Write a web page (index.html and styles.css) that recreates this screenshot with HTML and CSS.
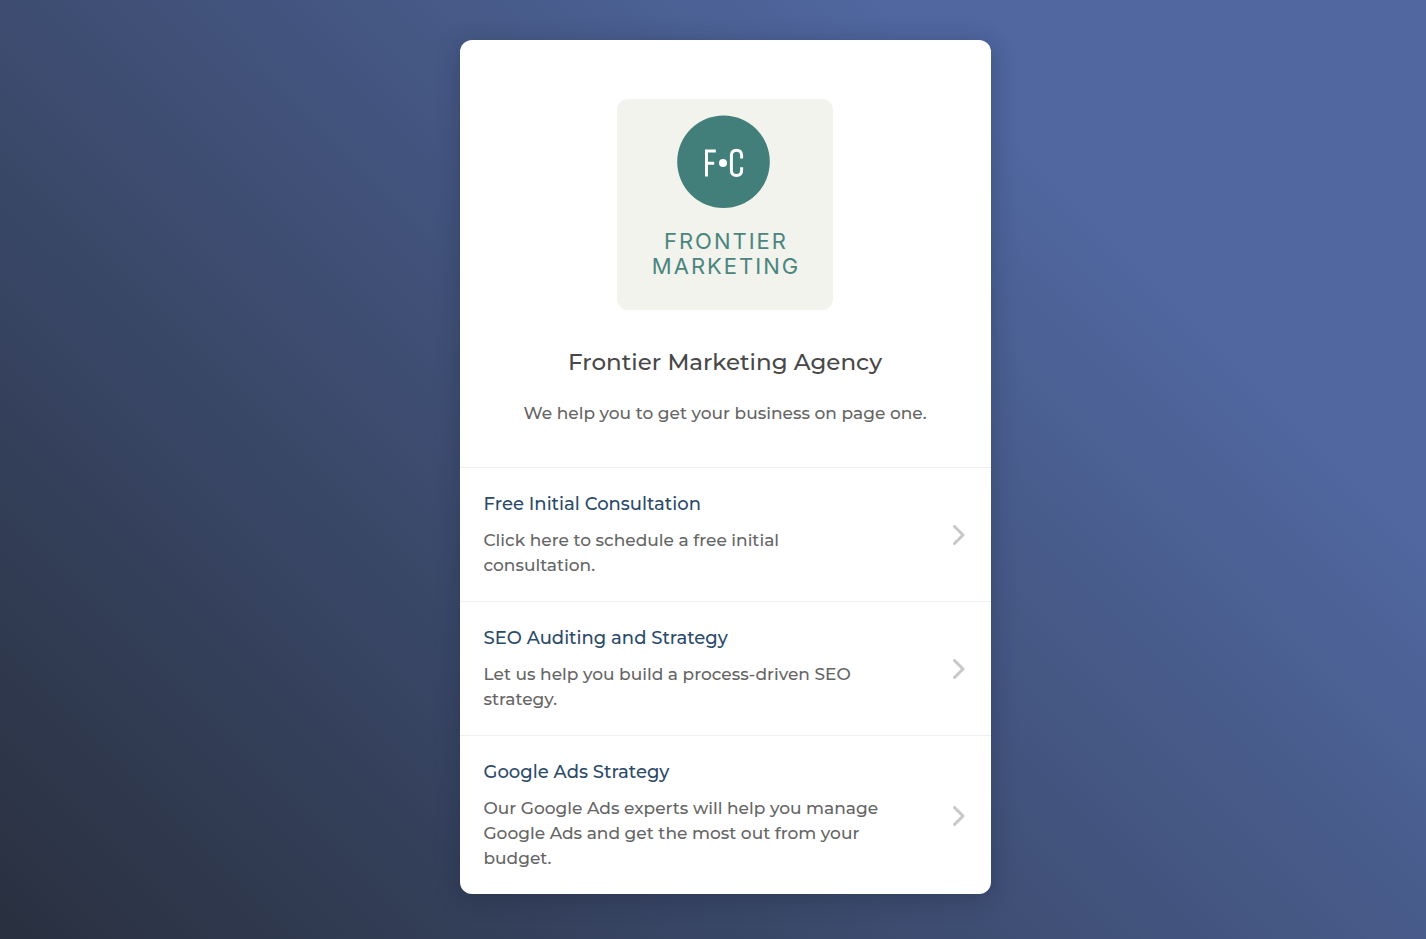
FILE: index.html
```html
<!DOCTYPE html>
<html lang="en">
<head>
<meta charset="utf-8">
<meta name="viewport" content="width=device-width, initial-scale=1">
<title>Frontier Marketing Agency</title>
<link rel="stylesheet" href="styles.css">
</head>
<body>
<main class="card">
  <header class="intro">
    <svg class="logo" viewBox="0 0 216 211" role="img" aria-label="Frontier Marketing logo">
      <rect width="216" height="211" rx="11" fill="#f2f3ec"/>
      <circle cx="106.500" cy="62.700" r="46.300" fill="#427e7a"/>
      <g fill="none" stroke="#fff" stroke-width="3">
        <path d="M98.800 52H89.500V77.500M89.500 64.200H97.200"/>
        <path d="M124.600 59.500V56.300Q124.600 51.300 119.500 51.300Q114.400 51.300 114.400 56.300V71.500Q114.400 76.500 119.500 76.500Q124.600 76.500 124.600 71.500V68.300"/>
      </g>
      <circle cx="106" cy="64" r="4" fill="#fff"/>
      <text class="logo-text" x="109" y="150">FRONTIER</text>
      <text class="logo-text" x="109" y="175">MARKETING</text>
    </svg>
    <h1 class="name">Frontier Marketing Agency</h1>
    <p class="tagline">We help you to get your business on page one.</p>
  </header>
  <nav class="links" aria-label="Services">
    <a class="link" href="#consultation">
      <span class="body"><span class="title">Free Initial Consultation</span><span class="text">Click here to schedule a free initial consultation.</span></span>
      <svg class="chevron" viewBox="0 0 12 20" aria-hidden="true"><path d="M1.500 1.500L10 10L1.500 18.500"/></svg>
    </a>
    <a class="link" href="#seo">
      <span class="body"><span class="title">SEO Auditing and Strategy</span><span class="text">Let us help you build a process-driven SEO strategy.</span></span>
      <svg class="chevron" viewBox="0 0 12 20" aria-hidden="true"><path d="M1.500 1.500L10 10L1.500 18.500"/></svg>
    </a>
    <a class="link" href="#ads">
      <span class="body"><span class="title">Google Ads Strategy</span><span class="text">Our Google Ads experts will help you manage Google Ads and get the most out from your budget.</span></span>
      <svg class="chevron" viewBox="0 0 12 20" aria-hidden="true"><path d="M1.500 1.500L10 10L1.500 18.500"/></svg>
    </a>
  </nav>
</main>
</body>
</html>
```

FILE: styles.css
```css
* { box-sizing: border-box; }
body {
  margin: 0;
  min-height: 100vh;
  padding: 40px 16px 44px 40px;
  background: linear-gradient(45deg, #29303f, #50679f 77%);
  font-family: Montserrat, Inter, sans-serif;
  color: #656565;
}
.card {
  width: 100%;
  max-width: 531px;
  margin: 0 auto;
  border-radius: 12px;
  background: #fff;
  box-shadow: 0 4px 24px rgba(20, 28, 50, 0.3);
  overflow: hidden;
}
.intro {
  display: flex;
  flex-direction: column;
  align-items: center;
  padding: 59px 24px 41px;
  text-align: center;
}
.logo { width: 216px; height: 211px; }
.logo-text {
  font-family: Inter, sans-serif;
  font-size: 22px;
  font-weight: 400;
  letter-spacing: 2px;
  text-anchor: middle;
  fill: #4b8580;
}
.name {
  margin: 36px 0 0;
  font-size: 23px;
  line-height: 32px;
  font-weight: 500;
  color: #484848;
}
.tagline { margin: 22px 0 0; font-size: 17px; line-height: 26px; font-weight: 500; }
.link {
  display: flex;
  align-items: center;
  justify-content: space-between;
  padding: 24px 26px 23px 24px;
  border-top: 1px solid #f0f0f0;
  text-decoration: none;
  color: inherit;
}
.body { display: flex; flex-direction: column; gap: 12px; max-width: 410px; }
.title { font-size: 18px; line-height: 24px; font-weight: 500; color: #2b4a69; }
.text { font-size: 17px; line-height: 25px; font-weight: 500; }
.chevron {
  flex: none;
  width: 12px;
  height: 20px;
  fill: none;
  stroke: #c8c8c8;
  stroke-width: 3;
  stroke-linecap: round;
  stroke-linejoin: round;
}
```
